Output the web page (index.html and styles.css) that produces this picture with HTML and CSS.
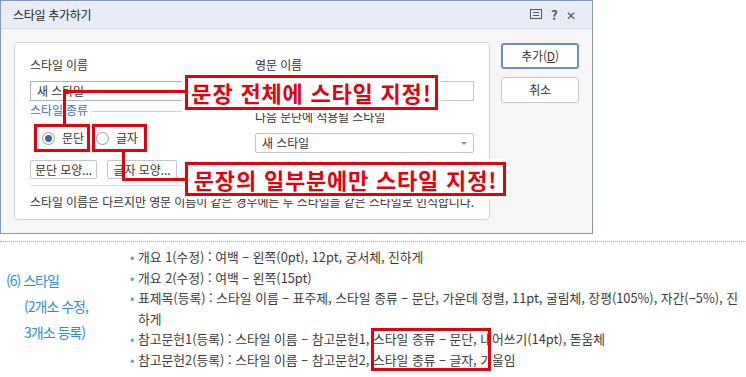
FILE: index.html
```html
<!DOCTYPE html>
<html lang="ko">
<head>
    <meta charset="UTF-8">
    <meta name="viewport" content="width=device-width, initial-scale=1.0">
    <title>스타일 추가하기</title>
    <link rel="stylesheet" href="styles.css">
</head>
<body>
    <div class="shot">
        <div class="dialog">
            <div class="titlebar">
                <span class="title">스타일 추가하기</span>
                <div class="title-tools">
                    <svg class="memo" width="12" height="11" viewBox="0 0 12 11">
                        <rect x="0.5" y="0.5" width="11" height="9" fill="none" stroke="#555"/>
                        <path d="M3 3.5h6M3 6.5h6" stroke="#555"/>
                    </svg>
                    <span class="help">?</span>
                    <span class="close">✕</span>
                </div>
            </div>

            <div class="dialog-body">
                <div class="panel">
                    <div class="grid">
                        <div class="col">
                            <div class="label">스타일 이름</div>
                            <div class="input focus">새 스타일</div>
                            <div class="group-title"><span>스타일 종류</span></div>
                            <div class="radios">
                                <span class="radio on"><i></i>문단</span>
                                <span class="radio"><i></i>글자</span>
                            </div>
                        </div>
                        <div class="col">
                            <div class="label">영문 이름</div>
                            <div class="input"></div>
                            <div class="label next">다음 문단에 적용될 스타일</div>
                            <div class="select">새 스타일<span class="arrow"></span></div>
                        </div>
                    </div>

                    <div class="btn-row">
                        <span class="btn w67">문단 모양...</span>
                        <span class="btn w70">글자 모양...</span>
                        <span class="btn w70 last"></span>
                    </div>

                    <div class="sep"></div>
                    <p class="note">스타일 이름은 다르지만 영문 이름이 같은 경우에는 두 스타일을 같은 스타일로 인식합니다.</p>
                </div>

                <div class="side">
                    <span class="side-btn primary">추가(<u>D</u>)</span>
                    <span class="side-btn">취소</span>
                </div>
            </div>
        </div>

        <!-- annotations -->
        <div class="callout callout-whole">문장 전체에 스타일 지정!</div>
        <div class="callout callout-part">문장의 일부분에만 스타일 지정!</div>
        <div class="mark mark-para"></div>
        <div class="mark mark-char"></div>
        <div class="leader leader-whole"></div>
        <div class="leader leader-part"></div>
    </div>

    <div class="notes">
        <div class="notes-head">
            <p class="head-title">(6) 스타일</p>
            <p class="head-sub">(2개소 수정,<br>3개소 등록)</p>
        </div>
        <ul class="notes-list">
            <li><span class="bullet">•</span><span>개요 1(수정) : 여백 – 왼쪽(0pt), 12pt, 궁서체, 진하게</span></li>
            <li><span class="bullet">•</span><span>개요 2(수정) : 여백 – 왼쪽(15pt)</span></li>
            <li><span class="bullet">•</span><span>표제목(등록) : 스타일 이름 – 표주제, 스타일 종류 – 문단, 가운데 정렬, 11pt, 굴림체, 장평(105%), 자간(−5%), 진하게</span></li>
            <li><span class="bullet">•</span><span>참고문헌1(등록) : 스타일 이름 – 참고문헌1, 스타일 종류 – 문단, 내어쓰기(14pt), 돋움체</span></li>
            <li><span class="bullet">•</span><span>참고문헌2(등록) : 스타일 이름 – 참고문헌2, 스타일 종류 – 글자, 기울임</span></li>
        </ul>
        <div class="note-mark"></div>
    </div>
</body>
</html>
```

FILE: styles.css
```css
* {
    box-sizing: border-box;
}
body {
    margin: 0;
    width: 746px;
    height: 377px;
    overflow: hidden;
    background-color: #fff;
    font-family: "Noto Sans CJK KR", "Noto Sans", sans-serif;
    color: #333;
}
p {
    margin: 0;
}
.shot {
    position: relative;
}
.dialog {
    width: 593px;
    height: 234px;
    border: 1px solid #8396bf;
    background-color: #f6f6f6;
    display: flex;
    flex-direction: column;
}
.titlebar {
    height: 28px;
    flex: none;
    background-color: #e8ecf6;
    border-bottom: 1px solid #d6dceb;
    display: flex;
    align-items: center;
    justify-content: space-between;
    padding: 0 16px 0 12px;
    font-size: 12px;
    letter-spacing: -0.3px;
    color: #222;
}
.title-tools {
    display: flex;
    align-items: center;
    gap: 9px;
    color: #555;
}
.help {
    font-weight: bold;
    font-size: 13px;
}
.close {
    font-size: 12px;
}
.dialog-body {
    display: flex;
    gap: 11px;
    padding: 13px 12px 12px 13px;
}
.panel {
    width: 476px;
    height: 178px;
    background-color: #fff;
    border: 1px solid #d4d4d4;
    border-radius: 4px;
    padding: 14px 15px 0 15px;
    font-size: 12px;
    letter-spacing: -0.1px;
}
.grid {
    display: grid;
    grid-template-columns: 1fr 219px;
    column-gap: 10px;
}
.col {
    display: flex;
    flex-direction: column;
}
.label {
    line-height: 16px;
}
.label.next {
    margin-top: 8px;
}
.input {
    margin-top: 8px;
    height: 20px;
    border: 1px solid #c4c4c4;
    padding: 0 6px;
    line-height: 18px;
}
.input.focus {
    border-color: #a5b4d3;
}
.group-title {
    margin-top: 1px;
    line-height: 16px;
    color: #4470b6;
    display: flex;
    align-items: center;
    gap: 4px;
}
.group-title::after {
    content: "";
    flex: 1;
    border-top: 1px solid #d0d0d0;
    margin-top: 3px;
}
.radios {
    margin-top: 12px;
    display: flex;
    gap: 12px;
    padding-left: 12px;
    line-height: 16px;
}
.radio {
    display: flex;
    align-items: center;
    gap: 7px;
}
.radio i {
    width: 13px;
    height: 13px;
    border: 1px solid #9a9a9a;
    border-radius: 50%;
    background-color: #fff;
    display: flex;
    align-items: center;
    justify-content: center;
}
.radio.on i::after {
    content: "";
    width: 7px;
    height: 7px;
    border-radius: 50%;
    background-color: #3f66b4;
}
.select {
    margin-top: 8px;
    height: 20px;
    border: 1px solid #c4c4c4;
    border-radius: 2px;
    padding: 0 6px;
    line-height: 18px;
    display: flex;
    justify-content: space-between;
    align-items: center;
}
.arrow {
    width: 0;
    height: 0;
    border-left: 3px solid transparent;
    border-right: 3px solid transparent;
    border-top: 3px solid #888;
}
.btn-row {
    margin-top: 7px;
    display: flex;
    gap: 10px;
}
.btn {
    height: 19px;
    border: 1px solid #c6c6c6;
    border-radius: 2px;
    line-height: 17px;
    text-align: center;
    background-color: #fff;
}
.btn.last {
    margin-left: -4px;
}
.w67 {
    width: 67px;
}
.w70 {
    width: 70px;
}
.sep {
    margin-top: 6px;
    border-top: 1px solid #dcdcdc;
}
.note {
    margin-top: 8px;
    line-height: 16px;
    white-space: nowrap;
}
.side {
    display: flex;
    flex-direction: column;
    gap: 8px;
    padding-top: 1px;
}
.side-btn {
    width: 78px;
    height: 26px;
    border: 1px solid #c6c6c6;
    border-radius: 3px;
    background-color: #fff;
    font-size: 12px;
    letter-spacing: -0.2px;
    line-height: 24px;
    text-align: center;
}
.side-btn.primary {
    border: 2px solid #6d8bcb;
    line-height: 22px;
}

/* red annotations over the dialog */
.callout {
    position: absolute;
    border: 3px solid #e3000f;
    background-color: #fff;
    box-shadow: 0 0 0 3px #fff;
    color: #e3000f;
    font-weight: bold;
    font-size: 22px;
    letter-spacing: 0.8px;
    line-height: 28px;
    text-align: center;
    white-space: nowrap;
}
.callout-whole {
    left: 185px;
    top: 75px;
    width: 253px;
    height: 35px;
}
.callout-part {
    left: 185px;
    top: 162px;
    width: 321px;
    height: 34px;
}
.mark {
    position: absolute;
    border: 3px solid #e3000f;
}
.mark-para {
    left: 34px;
    top: 124px;
    width: 56px;
    height: 28px;
}
.mark-char {
    left: 92px;
    top: 124px;
    width: 55px;
    height: 28px;
}
.leader {
    position: absolute;
    border: 0 solid #e3000f;
}
.leader-whole {
    left: 63px;
    top: 90px;
    width: 122px;
    height: 34px;
    border-top-width: 3px;
    border-left-width: 3px;
}
.leader-part {
    left: 122px;
    top: 152px;
    width: 63px;
    height: 29px;
    border-left-width: 3px;
    border-bottom-width: 3px;
}

/* notes below the screenshot */
.notes {
    position: relative;
    margin-top: 7px;
    border-top: 1px dotted #b0b0b0;
    display: flex;
}
.notes-head {
    width: 130px;
    flex: none;
    padding-top: 25px;
    color: #2d8ed6;
    font-size: 14px;
    letter-spacing: -1px;
    line-height: 26px;
}
.head-title {
    padding-left: 6px;
}
.head-sub {
    padding-left: 24px;
}
.notes-list {
    list-style: none;
    margin: 0;
    padding: 5px 0 0 0;
    width: 610px;
    font-size: 12.8px;
    line-height: 20.6px;
    color: #3a3a3a;
}
.notes-list li {
    display: flex;
    gap: 3px;
}
.bullet {
    color: #4ea6df;
    width: 5px;
    flex: none;
}
.note-mark {
    position: absolute;
    left: 371px;
    top: 86px;
    width: 120px;
    height: 43px;
    border: 3px solid #e3000f;
}
```
